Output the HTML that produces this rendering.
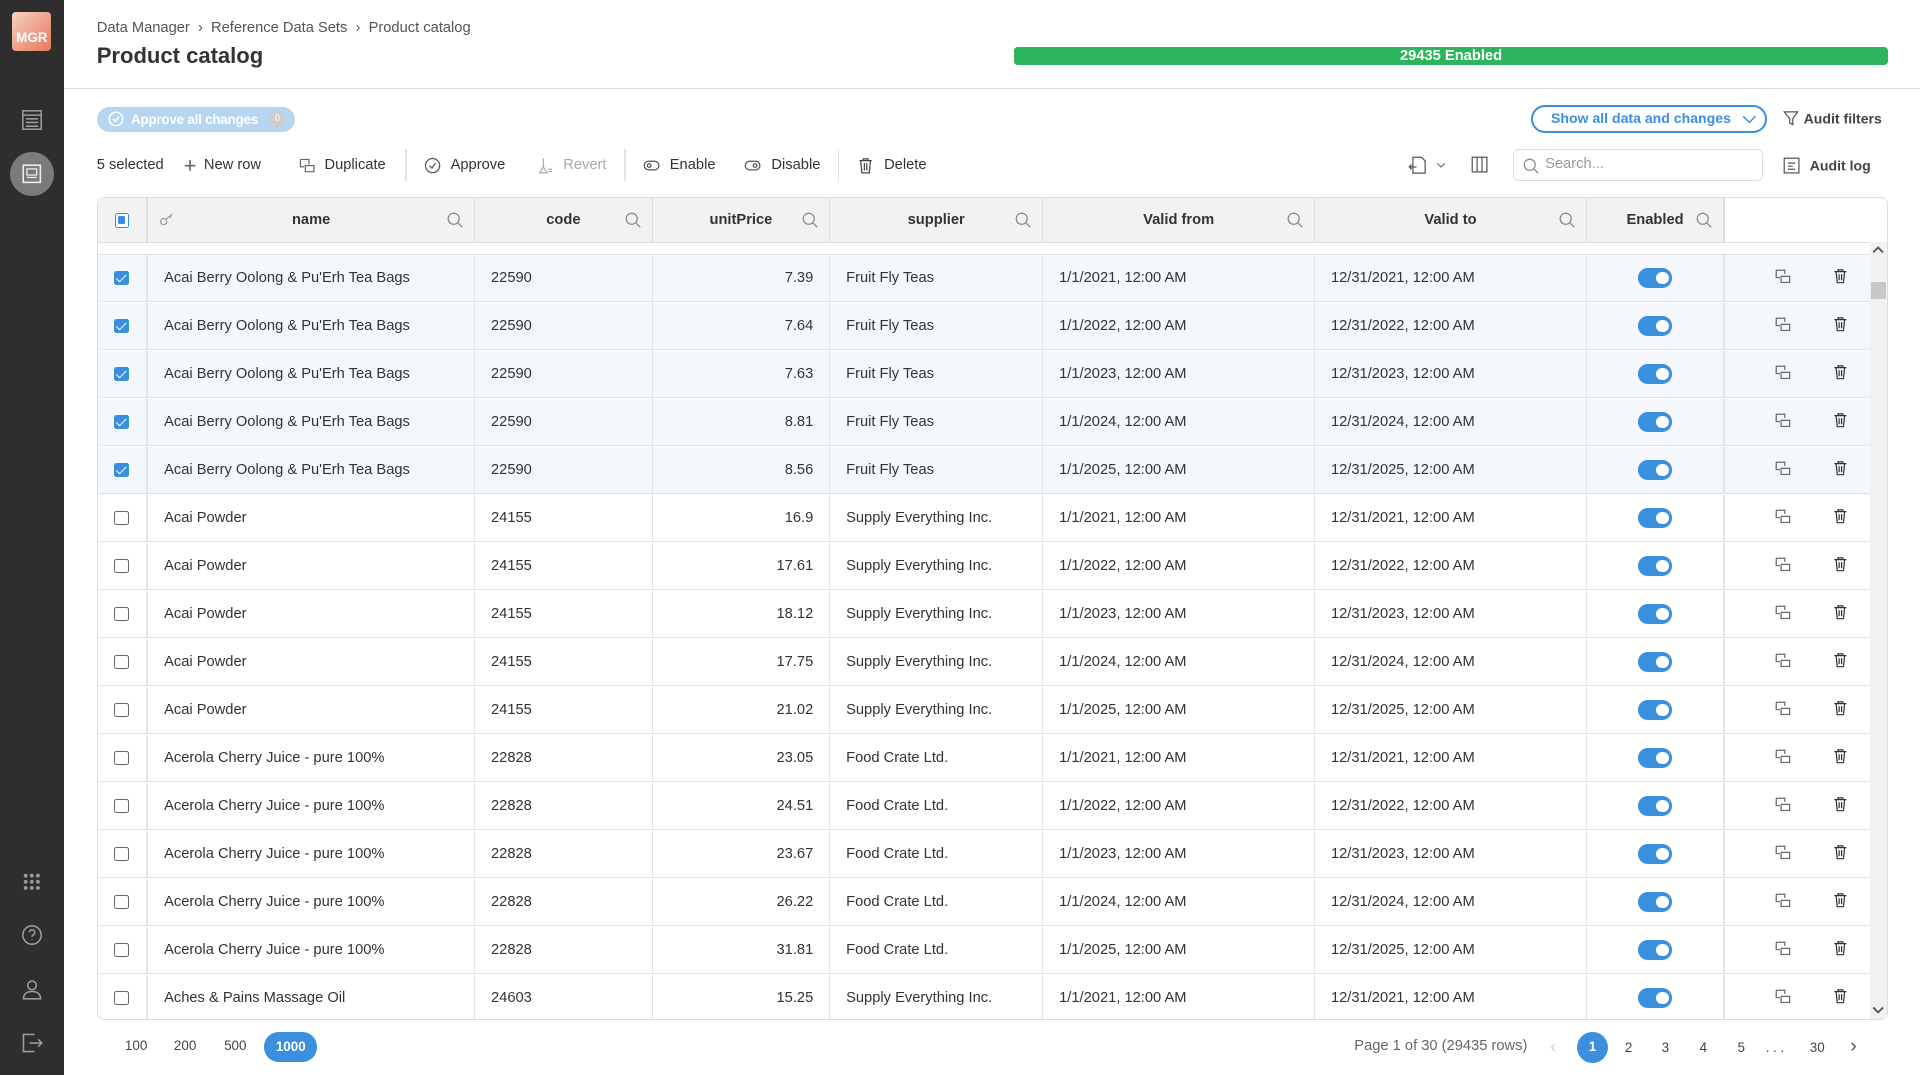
<!DOCTYPE html>
<html><head><meta charset="utf-8"><style>
*{box-sizing:border-box;margin:0;padding:0}
html,body{width:1920px;height:1075px;overflow:hidden;background:#fff}
#z{zoom:1.22449;width:1568px;height:878px;position:relative;font-family:"Liberation Sans",sans-serif;color:#333;font-size:12px}
.a{position:absolute}
.sb{left:0;top:0;width:52px;height:878px;background:#2e2e2e}
.ic{stroke:#9a9a9a;fill:none;stroke-width:1.3}
.row{position:absolute;left:80px;width:1447px;height:39px;border-bottom:1px solid #e3e3e3;display:flex;align-items:center;font-size:12px;color:#333}
.row.s{background:#f4f8fc}
.c{height:100%;display:flex;align-items:center;border-right:1px solid #e3e3e3;padding:0 13px;white-space:nowrap}
.cb{width:12px;height:12px;border:1.3px solid #666;border-radius:2px;background:#fff}
.cb.on{background:#3a8fdf;border-color:#3a8fdf;position:relative}
.cb.on:after{content:"";position:absolute;left:3px;top:0px;width:3px;height:7px;border:solid #fff;border-width:0 1.6px 1.6px 0;transform:rotate(45deg)}
.tg{width:28px;height:16px;border-radius:8px;background:#3a8fdf;position:relative;margin:auto}
.tg:after{content:"";position:absolute;right:3px;top:3px;width:10px;height:10px;border-radius:5px;background:#fff}
.hd{position:absolute;left:80px;top:162px;width:1329px;height:36px;background:#f2f2f2;display:flex;font-weight:bold;font-size:12px;color:#333}
.hd .c{border-right:1px solid #ddd;justify-content:center;position:relative}
.mg{position:absolute;right:9px;top:11px}
.tb{top:128px;font-size:12px;color:#333;display:flex;align-items:center;white-space:nowrap}
</style></head><body><div id="z">
<div class="a sb">
 <div class="a" style="left:10px;top:10px;width:32px;height:32px;border-radius:3px;background:linear-gradient(135deg,#f6d2c4,#e8775a);color:#fff;font-size:11px;font-weight:bold;text-align:center;line-height:42px">MGR</div>
 <svg class="a" style="left:17px;top:89px" width="18" height="18"><rect class="ic" x="1.5" y="1.5" width="15" height="15"/><path class="ic" d="M1.5 5h15M4 8h10M4 11h10M4 14h10"/></svg>
 <div class="a" style="left:8px;top:124px;width:36px;height:36px;border-radius:18px;background:#7b7b7b"></div>
 <svg class="a" style="left:18px;top:134px" width="16" height="16"><rect x="1" y="1" width="14" height="14" fill="none" stroke="#eee" stroke-width="1.3"/><rect x="4" y="4" width="8" height="5" fill="none" stroke="#eee"/><path d="M4 11h8" stroke="#eee"/></svg>
 <svg class="a" style="left:18px;top:712px" width="16" height="16"><g fill="#999"><circle cx="3" cy="3" r="1.6"/><circle cx="8" cy="3" r="1.6"/><circle cx="13" cy="3" r="1.6"/><circle cx="3" cy="8" r="1.6"/><circle cx="8" cy="8" r="1.6"/><circle cx="13" cy="8" r="1.6"/><circle cx="3" cy="13" r="1.6"/><circle cx="8" cy="13" r="1.6"/><circle cx="13" cy="13" r="1.6"/></g></svg>
 <svg class="a" style="left:17px;top:755px" width="18" height="18"><circle class="ic" cx="9" cy="9" r="7.5"/><path class="ic" d="M6.8 7a2.2 2.2 0 1 1 3 2c-.6.3-.8.7-.8 1.5M9 12.8v.5"/></svg>
 <svg class="a" style="left:17px;top:799px" width="18" height="18"><circle class="ic" cx="9" cy="6" r="3.5"/><path class="ic" d="M2 17c0-4 3-6 7-6s7 2 7 6z"/></svg>
 <svg class="a" style="left:17px;top:843px" width="18" height="18"><path class="ic" d="M11 2H2v14h9M7 9h10M14 6l3 3-3 3"/></svg>
</div>
<div class="a" style="left:79px;top:16px;font-size:12px;color:#555">Data Manager &nbsp;›&nbsp; Reference Data Sets &nbsp;›&nbsp; Product catalog</div>
<div class="a" style="left:79px;top:35px;font-size:18px;font-weight:bold;color:#333">Product catalog</div>
<div class="a" style="left:828px;top:38px;width:714px;height:15px;border-radius:3px;background:#2db55d;color:#fff;font-weight:bold;font-size:12px;text-align:center;line-height:15px">29435 Enabled</div>
<div class="a" style="left:52px;top:72px;width:1516px;height:1px;background:#ddd"></div>
<div class="a" style="left:79px;top:87px;width:162px;height:21px;border-radius:11px;background:#b5d5f1;color:#fff;font-weight:bold;font-size:11px;line-height:21px;padding-left:28px;white-space:nowrap;letter-spacing:-0.2px">Approve all changes<span style="position:absolute;left:141px;top:4px;width:13px;height:13px;border-radius:7px;background:#ccc;color:#eee;font-size:8px;text-align:center;line-height:13px;letter-spacing:0">0</span>
<svg class="a" style="left:9px;top:4px" width="13" height="13"><circle cx="6.5" cy="6.5" r="5.5" fill="none" stroke="#fff" stroke-width="1.2"/><path d="M4 6.5l2 2 3-4" fill="none" stroke="#fff" stroke-width="1.2"/></svg></div>
<div class="a" style="left:1250px;top:86px;width:193px;height:23px;border:2px solid #3a8fdf;border-radius:12px;color:#3a8fdf;font-weight:bold;font-size:11.5px;line-height:19px;padding-left:15px;white-space:nowrap">Show all data and changes <svg style="margin-left:6px;vertical-align:-1px" width="12" height="8"><path d="M1 1l5 5 5-5" fill="none" stroke="#3a8fdf" stroke-width="1.2"/></svg></div>
<div class="a" style="left:1456px;top:90px;font-weight:bold;font-size:11.5px;color:#444;white-space:nowrap"><svg style="vertical-align:-2px;margin-right:4px" width="13" height="13"><path d="M1 1.5h11L8 7v5L5.5 10.5V7z" fill="none" stroke="#555"/></svg>Audit filters</div>
<div class="a tb" style="left:79px">5 selected</div>
<div class="a tb" style="left:150px"><span style="font-size:18px;color:#666;margin-right:6px;font-weight:300;line-height:14px">+</span>New row</div>
<div class="a tb" style="left:243px"><svg width="14" height="14" style="margin-right:8px"><path d="M2 2h7v4M2 2v6h3M6 7h7v5H6z" fill="none" stroke="#666"/></svg>Duplicate</div>
<div class="a" style="left:331px;top:122px;width:1px;height:26px;background:#e3e3e3"></div>
<div class="a tb" style="left:346px"><svg width="14" height="14" style="margin-right:8px"><circle cx="7" cy="7" r="5.8" fill="none" stroke="#555"/><path d="M4.5 7l2 2 3-4" fill="none" stroke="#555"/></svg>Approve</div>
<div class="a tb" style="left:438px;color:#aaa"><svg width="14" height="14" style="margin-right:8px"><path d="M6 1v7M3 13l3-5 3 5zM10 10h3M10 12h3" fill="none" stroke="#aaa"/></svg>Revert</div>
<div class="a" style="left:510px;top:122px;width:1px;height:26px;background:#e3e3e3"></div>
<div class="a tb" style="left:525px"><svg width="14" height="14" style="margin-right:8px"><rect x="1" y="3.5" width="12" height="7" rx="3.5" fill="none" stroke="#555"/><circle cx="5" cy="7" r="1.5" fill="none" stroke="#555"/></svg>Enable</div>
<div class="a tb" style="left:608px"><svg width="14" height="14" style="margin-right:8px"><rect x="1" y="3.5" width="12" height="7" rx="3.5" fill="none" stroke="#555"/><circle cx="9" cy="7" r="1.5" fill="none" stroke="#555"/></svg>Disable</div>
<div class="a" style="left:684px;top:122px;width:1px;height:26px;background:#e3e3e3"></div>
<div class="a tb" style="left:700px"><svg width="14" height="14" style="margin-right:8px"><path d="M2 3h10M5 3V1.5h4V3M3 3l1 10h6l1-10M6 5v6M8 5v6" fill="none" stroke="#444"/></svg>Delete</div>
<svg class="a" style="left:1150px;top:127px" width="32" height="16"><path d="M4 1h7l3 3v10H4zM1 9h6M3 7l-2 2 2 2" fill="none" stroke="#555"/><path d="M24 6l3 3 3-3" fill="none" stroke="#777"/></svg>
<svg class="a" style="left:1201px;top:127px" width="14" height="14"><rect x="1" y="1" width="12" height="12" fill="none" stroke="#555"/><path d="M5 1v12M9 1v12" stroke="#555"/></svg>
<div class="a" style="left:1236px;top:122px;width:204px;height:26px;border:1px solid #ddd;border-radius:5px;color:#999;font-size:12px;line-height:24px;padding-left:25px">Search...<svg class="a" style="left:7px;top:6px" width="13" height="13"><circle cx="5.5" cy="5.5" r="4.5" fill="none" stroke="#888"/><path d="M9 9l3.5 3.5" stroke="#888"/></svg></div>
<div class="a" style="left:1456px;top:128px;font-weight:bold;font-size:11.5px;color:#444;white-space:nowrap"><svg style="vertical-align:-3px;margin-right:8px" width="14" height="14"><rect x="1" y="1" width="12" height="12" fill="none" stroke="#555"/><path d="M4 5h6M4 7.5h4M4 10h6" stroke="#555"/></svg>Audit log</div>

<div class="a" style="left:79px;top:161px;width:1463px;height:672px;border:1px solid #ddd;border-radius:6px;overflow:hidden">
</div>
<div class="hd">
 <div class="c" style="width:41px;border-right:2px solid #ddd"><div class="cb" style="border-color:#3a8fdf;position:relative"><div style="position:absolute;left:2px;top:2px;width:6px;height:6px;background:#3a8fdf;border-radius:1px"></div></div></div>
 <div class="c" style="width:267px">name<svg class="a" style="left:10px;top:12px" width="12" height="10"><circle cx="3" cy="7" r="2.5" fill="none" stroke="#999"/><path d="M5 5l5-4M8 2l1 2" fill="none" stroke="#999"/></svg><svg class="mg" width="13" height="13"><circle cx="5.5" cy="5.5" r="4.5" fill="none" stroke="#888"/><path d="M9 9l3.5 3.5" stroke="#888"/></svg></div>
 <div class="c" style="width:145px">code<svg class="mg" width="13" height="13"><circle cx="5.5" cy="5.5" r="4.5" fill="none" stroke="#888"/><path d="M9 9l3.5 3.5" stroke="#888"/></svg></div>
 <div class="c" style="width:145px">unitPrice<svg class="mg" width="13" height="13"><circle cx="5.5" cy="5.5" r="4.5" fill="none" stroke="#888"/><path d="M9 9l3.5 3.5" stroke="#888"/></svg></div>
 <div class="c" style="width:174px">supplier<svg class="mg" width="13" height="13"><circle cx="5.5" cy="5.5" r="4.5" fill="none" stroke="#888"/><path d="M9 9l3.5 3.5" stroke="#888"/></svg></div>
 <div class="c" style="width:222px">Valid from<svg class="mg" width="13" height="13"><circle cx="5.5" cy="5.5" r="4.5" fill="none" stroke="#888"/><path d="M9 9l3.5 3.5" stroke="#888"/></svg></div>
 <div class="c" style="width:222px">Valid to<svg class="mg" width="13" height="13"><circle cx="5.5" cy="5.5" r="4.5" fill="none" stroke="#888"/><path d="M9 9l3.5 3.5" stroke="#888"/></svg></div>
 <div class="c" style="width:113px;border-right:2px solid #ddd">Enabled<svg class="mg" width="13" height="13"><circle cx="5.5" cy="5.5" r="4.5" fill="none" stroke="#888"/><path d="M9 9l3.5 3.5" stroke="#888"/></svg></div>
</div>
<div class="a" style="left:80px;top:198px;width:1447px;height:10px;border-top:1px solid #ddd;border-bottom:1px solid #e3e3e3"></div>
<div class="a" style="left:1527px;top:198px;width:14px;height:634px;background:#f1f1f1"></div>
<div class="a" style="left:1528px;top:230px;width:12px;height:14px;background:#c8c8c8"></div>
<svg class="a" style="left:1529px;top:200px" width="10" height="8"><path d="M1 6l4-4 4 4" fill="none" stroke="#555" stroke-width="1.5"/></svg>
<svg class="a" style="left:1529px;top:821px" width="10" height="8"><path d="M1 2l4 4 4-4" fill="none" stroke="#555" stroke-width="1.5"/></svg>
<div class="a" style="left:80px;top:208px;width:1447px;height:624px;overflow:hidden">
<div id="rows" style="position:relative;left:-80px;top:-208px"></div>
</div>
<div class="a" style="left:102px;top:848px;font-size:11px;color:#444">100</div>
<div class="a" style="left:142px;top:848px;font-size:11px;color:#444">200</div>
<div class="a" style="left:183px;top:848px;font-size:11px;color:#444">500</div>
<div class="a" style="left:216px;top:843px;width:43px;height:24px;border-radius:12px;background:#3a8fdf;color:#fff;font-size:11px;font-weight:bold;text-align:center;line-height:24px">1000</div>
<div class="a" style="left:1106px;top:848px;font-size:12px;color:#666;white-space:nowrap">Page 1 of 30 (29435 rows)</div>
<div class="a" style="left:1266px;top:846px;font-size:14px;color:#ccc">‹</div>
<div class="a" style="left:1288px;top:843px;width:25px;height:25px;border-radius:13px;background:#3a8fdf;color:#fff;font-size:11px;font-weight:bold;text-align:center;line-height:25px">1</div>
<div class="a" style="left:1327px;top:849px;font-size:11px;color:#444">2</div>
<div class="a" style="left:1357px;top:849px;font-size:11px;color:#444">3</div>
<div class="a" style="left:1388px;top:849px;font-size:11px;color:#444">4</div>
<div class="a" style="left:1419px;top:849px;font-size:11px;color:#444">5</div>
<div class="a" style="left:1442px;top:849px;font-size:11px;color:#444;letter-spacing:3px">...</div>
<div class="a" style="left:1478px;top:849px;font-size:11px;color:#444">30</div>
<div class="a" style="left:1511px;top:845px;font-size:16px;color:#555">›</div>
<script>
var d=[];
var P1=[7.39,7.64,7.63,8.81,8.56],P2=[16.9,17.61,18.12,17.75,21.02],P3=[23.05,24.51,23.67,26.22,31.81];
for(var i=0;i<5;i++)d.push(["Acai Berry Oolong &amp; Pu'Erh Tea Bags","22590",P1[i],"Fruit Fly Teas",2021+i,1]);
for(var i=0;i<5;i++)d.push(["Acai Powder","24155",P2[i],"Supply Everything Inc.",2021+i,0]);
for(var i=0;i<5;i++)d.push(["Acerola Cherry Juice - pure 100%","22828",P3[i],"Food Crate Ltd.",2021+i,0]);
d.push(["Aches &amp; Pains Massage Oil","24603",15.25,"Supply Everything Inc.",2021,0]);
var h="";
var dup='<svg width="13" height="12"><path d="M1 1h7v3M1 1v6h3M5 6h7v5H5z" fill="none" stroke="#666"/></svg>';
var del='<svg width="12" height="13"><path d="M1 3h10M4 3V1.5h4V3M2.5 3l1 9h5l1-9M5 5v5M7 5v5" fill="none" stroke="#333"/></svg>';
d.forEach(function(r,k){
var t=208+k*39.2;
h+='<div class="row'+(r[5]?' s':'')+'" style="top:'+t+'px">'+
'<div class="c" style="width:41px;border-right:2px solid #e3e3e3;padding:0 13px"><div class="cb'+(r[5]?' on':'')+'"></div></div>'+
'<div class="c" style="width:267px">'+r[0]+'</div>'+
'<div class="c" style="width:145px">'+r[1]+'</div>'+
'<div class="c" style="width:145px;justify-content:flex-end">'+r[2]+'</div>'+
'<div class="c" style="width:174px">'+r[3]+'</div>'+
'<div class="c" style="width:222px">1/1/'+r[4]+', 12:00 AM</div>'+
'<div class="c" style="width:222px">12/31/'+r[4]+', 12:00 AM</div>'+
'<div class="c" style="width:113px;border-right:2px solid #e3e3e3"><div class="tg"></div></div>'+
'<div class="c" style="width:118px;border:0;padding:0"><span style="margin-left:41px">'+dup+'</span><span style="margin-left:34px">'+del+'</span></div></div>';
});
document.getElementById("rows").innerHTML=h;
</script>
</div></body></html>
